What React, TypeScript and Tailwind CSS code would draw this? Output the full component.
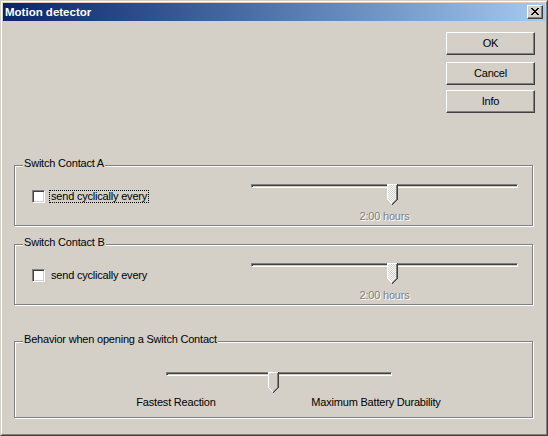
import { useId, type ReactNode } from 'react'

// classic 3D bevel used by push buttons and caption buttons
const RAISED =
  'border border-t-white border-l-white border-b-[#404040] border-r-[#404040] shadow-[inset_-1px_-1px_0_#808080]'
const DISABLED = 'text-[#808080] [text-shadow:1px_1px_0_#ffffff]'

function PushButton({ label, className = '' }: { label: string; className?: string }) {
  return (
    <button
      className={`w-[89px] h-[23px] flex items-center justify-center bg-[#d4d0c8] ${RAISED} ${className}`}
    >
      {label}
    </button>
  )
}

function CloseButton() {
  // marlett style "x" glyph, 8x7
  const rows = ['11000011', '01100110', '00111100', '00011000', '00111100', '01100110', '11000011']
  return (
    <div className={`ml-auto w-[16px] h-[14px] bg-[#d4d0c8] flex items-center justify-center ${RAISED}`}>
      <svg width="8" height="7" viewBox="0 0 8 7" shapeRendering="crispEdges" className="mb-[1px]">
        {rows.map((r, y) =>
          r.split('').map((c, x) => (c === '1' ? <rect key={`${x}-${y}`} x={x} y={y} width="1" height="1" fill="#000" /> : null)),
        )}
      </svg>
    </div>
  )
}

function Thumb({ dither = false, className = '' }: { dither?: boolean; className?: string }) {
  const id = useId().replace(/:/g, '')
  const fill = dither ? `url(#p${id})` : '#d4d0c8'
  const body = [
    [1, 1, 8, 15],
    [2, 16, 6, 1],
    [3, 17, 4, 1],
    [4, 18, 2, 1],
  ]
  const white = [
    [0, 0, 10, 1],
    [0, 0, 1, 16],
    [1, 16, 1, 1],
    [2, 17, 1, 1],
    [3, 18, 1, 1],
    [4, 19, 1, 1],
  ]
  const gray = [
    [9, 1, 1, 15],
    [8, 16, 1, 1],
    [7, 17, 1, 1],
    [6, 18, 1, 1],
    [5, 19, 1, 1],
  ]
  const dark = [
    [10, 0, 1, 16],
    [9, 16, 1, 1],
    [8, 17, 1, 1],
    [7, 18, 1, 1],
    [6, 19, 1, 1],
    [5, 20, 1, 1],
  ]
  const draw = (list: number[][], color: string) =>
    list.map(([x, y, w, h], i) => <rect key={`${color}${i}`} x={x} y={y} width={w} height={h} fill={color} />)
  return (
    <svg width="11" height="21" viewBox="0 0 11 21" shapeRendering="crispEdges" className={`absolute top-0 ${className}`}>
      <defs>
        <pattern id={`p${id}`} width="2" height="2" patternUnits="userSpaceOnUse">
          <rect width="2" height="2" fill="#d4d0c8" />
          <rect width="1" height="1" fill="#fff" />
          <rect x="1" y="1" width="1" height="1" fill="#fff" />
        </pattern>
      </defs>
      {draw(body, fill)}
      {draw(white, '#ffffff')}
      {draw(gray, '#808080')}
      {draw(dark, '#404040')}
    </svg>
  )
}

function Slider({ className, thumbClass, dither }: { className: string; thumbClass: string; dither?: boolean }) {
  return (
    <div className={`relative h-[21px] ${className}`}>
      <div className="mt-[7px] h-[4px] border border-t-[#808080] border-l-[#808080] border-b-white border-r-white shadow-[inset_1px_1px_0_#404040]" />
      <Thumb dither={dither} className={thumbClass} />
    </div>
  )
}

function Group({ title, className = '', children }: { title: string; className?: string; children: ReactNode }) {
  return (
    <div
      className={`relative ml-[11px] w-[519px] border border-[#808080] shadow-[1px_1px_0_#ffffff,inset_1px_1px_0_#ffffff] ${className}`}
    >
      <span className="absolute left-[8px] top-[-9px] px-[1px] bg-[#d4d0c8] leading-[13px] whitespace-nowrap">
        {title}
      </span>
      {children}
    </div>
  )
}

function Checkbox() {
  return (
    <div className="w-[13px] h-[13px] shrink-0 bg-white border border-t-[#808080] border-l-[#808080] border-b-white border-r-white shadow-[inset_1px_1px_0_#404040,inset_-1px_-1px_0_#d4d0c8]" />
  )
}

function ContactGroup({ title, focused, className = '' }: { title: string; focused?: boolean; className?: string }) {
  return (
    <Group title={title} className={`h-[61px] ${className}`}>
      <div className="flex">
        <div className="w-[236px] pt-[24px] pl-[17px] flex items-start">
          <Checkbox />
          <span
            className={`ml-[4px] h-[13px] px-[1px] leading-[11px] whitespace-nowrap border ${
              focused ? 'border-dotted border-black' : 'border-transparent'
            }`}
          >
            send cyclically every
          </span>
        </div>
        <div className="pt-[11px] w-[267px]">
          <Slider className="w-[267px]" thumbClass="left-[136px]" dither />
          <div className={`mt-[5px] text-center leading-[13px] ${DISABLED}`}>2:00 hours</div>
        </div>
      </div>
    </Group>
  )
}

export default function App() {
  return (
    <div className="w-[548px] h-[436px] bg-[#d4d0c8] border border-t-[#d4d0c8] border-l-[#d4d0c8] border-b-[#404040] border-r-[#404040] font-['Liberation_Sans',Arial,sans-serif] text-[11px] leading-[13px] tracking-[-0.2px] text-black select-none">
      <div className="h-full flex flex-col border border-t-white border-l-white border-b-[#808080] border-r-[#808080] p-[1px]">
        <div className="h-[18px] shrink-0 flex items-center bg-linear-to-r from-[#0a246a] to-[#a6caf0] pl-[2px] pr-[2px]">
          <span className="text-white font-bold text-[11.5px] leading-[14px] tracking-normal">Motion detector</span>
          <CloseButton />
        </div>

        <div className="flex-1 flex flex-col">
          <div className="flex flex-col items-end pr-[10px] pt-[11px]">
            <PushButton label="OK" />
            <PushButton label="Cancel" className="mt-[7px]" />
            <PushButton label="Info" className="mt-[5px]" />
          </div>

          <ContactGroup title="Switch Contact A" focused className="mt-[52px]" />
          <ContactGroup title="Switch Contact B" className="mt-[18px]" />

          <Group title="Behavior when opening a Switch Contact" className="mt-[36px] h-[77px]">
            <div className="pt-[23px] pl-[151px]">
              <Slider className="w-[226px]" thumbClass="left-[102px]" />
            </div>
            <div className="flex mt-[3px]">
              <div className="ml-[101px] w-[120px] text-center whitespace-nowrap">Fastest Reaction</div>
              <div className="ml-[50px] w-[180px] text-center whitespace-nowrap">Maximum Battery Durability</div>
            </div>
          </Group>
        </div>
      </div>
    </div>
  )
}
